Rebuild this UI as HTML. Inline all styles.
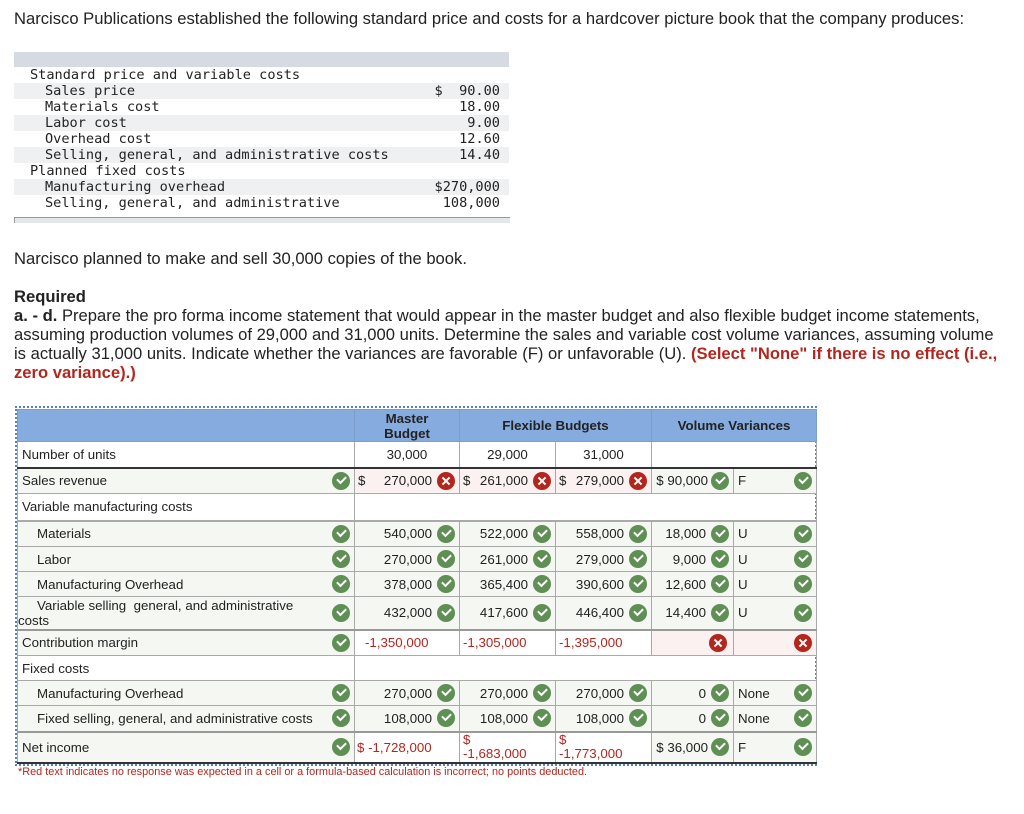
<!DOCTYPE html>
<html><head><meta charset="utf-8"><style>
body{margin:0;background:#fff;width:1024px;height:814px;position:relative;font-family:"Liberation Sans",sans-serif;color:#222;overflow:hidden}
.p{position:absolute;left:14px;font-size:16.6px;margin:0}
.mono{font-family:"DejaVu Sans Mono","Liberation Mono",monospace;font-size:13.6px;color:#222}
.tr{position:absolute;left:14px;width:495px;height:16px;line-height:16px}
.tr.g{background:#eef0f2}
.tr span{position:absolute;white-space:pre}
table{position:absolute;left:17px;top:409px;border-collapse:collapse;table-layout:fixed;font-size:13.3px}
td{border:1px solid #a9a9a9;padding:0;position:relative;white-space:nowrap}
.hd td{background:#86abdf;font-weight:bold;text-align:center;height:31px;border-color:#7c9cc9;line-height:15px}
.lab{padding-left:4px}
.ind{padding-left:19px}
.gr td{background:#f5f7f3}
.n{text-align:right;padding-right:27px}
.ok,.bad{position:absolute;right:4px;top:50%;margin-top:-9px;width:18px;height:18px;border-radius:50%}
.ok{background:#5f8f55}
.bad{background:#b3261e}
.ok:after{content:"";position:absolute;left:5px;top:4px;width:7px;height:4px;border-left:2px solid #fff;border-bottom:2px solid #fff;transform:rotate(-45deg)}
.bad:before,.bad:after{content:"";position:absolute;left:8px;top:4px;width:2px;height:10px;background:#fff;transform:rotate(45deg)}
.bad:after{transform:rotate(-45deg)}
.red{color:#b3261e}
.pink{background:#fbf1f1!important}
</style></head><body>
<p class="p" style="top:9px">Narcisco Publications established the following standard price and costs for a hardcover picture book that the company produces:</p>

<div style="position:absolute;left:14px;top:52px;width:495px;height:15px;background:#d6dbe3"></div>
<div class="mono">
<div class="tr" style="top:67px"><span style="left:16px">Standard price and variable costs</span></div>
<div class="tr g" style="top:83px"><span style="left:31px">Sales price</span><span style="right:9px">$  90.00</span></div>
<div class="tr" style="top:99px"><span style="left:31px">Materials cost</span><span style="right:9px">18.00</span></div>
<div class="tr g" style="top:115px"><span style="left:31px">Labor cost</span><span style="right:9px">9.00</span></div>
<div class="tr" style="top:131px"><span style="left:31px">Overhead cost</span><span style="right:9px">12.60</span></div>
<div class="tr g" style="top:147px"><span style="left:31px">Selling, general, and administrative costs</span><span style="right:9px">14.40</span></div>
<div class="tr" style="top:163px"><span style="left:16px">Planned fixed costs</span></div>
<div class="tr g" style="top:179px"><span style="left:31px">Manufacturing overhead</span><span style="right:9px">$270,000</span></div>
<div class="tr" style="top:195px"><span style="left:31px">Selling, general, and administrative</span><span style="right:9px">108,000</span></div>
</div>
<div style="position:absolute;left:14px;top:217px;width:495px;height:5px;background:#e3e6ea;border-top:1px solid #999;border-left:1px solid #999"></div>

<p class="p" style="top:249px">Narcisco planned to make and sell 30,000 copies of the book.</p>
<p class="p" style="top:287px;font-weight:bold">Required</p>
<p class="p" style="top:306px;width:995px;line-height:19px"><b>a. - d.</b> Prepare the pro forma income statement that would appear in the master budget and also flexible budget income statements, assuming production volumes of 29,000 and 31,000 units. Determine the sales and variable cost volume variances, assuming volume is actually 31,000 units. Indicate whether the variances are favorable (F) or unfavorable (U). <b style="color:#b3261e">(Select "None" if there is no effect (i.e., zero variance).)</b></p>

<div style="position:absolute;left:15px;top:406px;width:802px;height:360px;border:2px dotted #5a7fc0;box-sizing:border-box"></div>
<table>
<colgroup><col style="width:337px"><col style="width:105px"><col style="width:96px"><col style="width:96px"><col style="width:82px"><col style="width:83px"></colgroup>
<tr class="hd"><td></td><td>Master<br>Budget</td><td colspan="2">Flexible Budgets</td><td colspan="2">Volume Variances</td></tr>
<tr style="height:26px"><td class="lab">Number of units</td><td style="text-align:center">30,000</td><td style="text-align:center">29,000</td><td style="text-align:center">31,000</td><td colspan="2"></td></tr>
<tr class="gr" style="height:26px;border-top:2px solid #333"><td class="lab">Sales revenue<i class="ok"></i></td><td class="n pink"><span style="position:absolute;left:3px">$</span>270,000<i class="bad"></i></td><td class="n pink"><span style="position:absolute;left:3px">$</span>261,000<i class="bad"></i></td><td class="n pink"><span style="position:absolute;left:3px">$</span>279,000<i class="bad"></i></td><td class="n" style="padding-right:25px">$ 90,000<i class="ok"></i></td><td style="padding-left:4px">F<i class="ok"></i></td></tr>
<tr style="height:27px"><td class="lab">Variable manufacturing costs</td><td colspan="5"></td></tr>
<tr class="gr" style="height:26px;border-top:2px solid #aaa"><td class="ind">Materials<i class="ok"></i></td><td class="n">540,000<i class="ok"></i></td><td class="n">522,000<i class="ok"></i></td><td class="n">558,000<i class="ok"></i></td><td class="n">18,000<i class="ok"></i></td><td style="padding-left:4px">U<i class="ok"></i></td></tr>
<tr class="gr" style="height:25px"><td class="ind">Labor<i class="ok"></i></td><td class="n">270,000<i class="ok"></i></td><td class="n">261,000<i class="ok"></i></td><td class="n">279,000<i class="ok"></i></td><td class="n">9,000<i class="ok"></i></td><td style="padding-left:4px">U<i class="ok"></i></td></tr>
<tr class="gr" style="height:25px"><td class="ind">Manufacturing Overhead<i class="ok"></i></td><td class="n">378,000<i class="ok"></i></td><td class="n">365,400<i class="ok"></i></td><td class="n">390,600<i class="ok"></i></td><td class="n">12,600<i class="ok"></i></td><td style="padding-left:4px">U<i class="ok"></i></td></tr>
<tr class="gr" style="height:33px"><td style="line-height:15px;white-space:normal"><span style="padding-left:19px">Variable selling &nbsp;general, and administrative</span><br>costs<i class="ok"></i></td><td class="n">432,000<i class="ok"></i></td><td class="n">417,600<i class="ok"></i></td><td class="n">446,400<i class="ok"></i></td><td class="n">14,400<i class="ok"></i></td><td style="padding-left:4px">U<i class="ok"></i></td></tr>
<tr style="height:26px;border-top:2px solid #999"><td class="lab" style="background:#f5f7f3">Contribution margin<i class="ok"></i></td><td class="red" style="padding-left:10px">-1,350,000</td><td class="red" style="padding-left:3px">-1,305,000</td><td class="red" style="padding-left:3px">-1,395,000</td><td class="pink"><i class="bad" style="right:6px"></i></td><td class="pink"><i class="bad"></i></td></tr>
<tr style="height:25px"><td class="lab">Fixed costs</td><td colspan="5"></td></tr>
<tr class="gr" style="height:25px"><td class="ind">Manufacturing Overhead<i class="ok"></i></td><td class="n">270,000<i class="ok"></i></td><td class="n">270,000<i class="ok"></i></td><td class="n">270,000<i class="ok"></i></td><td class="n">0<i class="ok"></i></td><td style="padding-left:4px">None<i class="ok"></i></td></tr>
<tr class="gr" style="height:26px"><td class="ind">Fixed selling, general, and administrative costs<i class="ok"></i></td><td class="n">108,000<i class="ok"></i></td><td class="n">108,000<i class="ok"></i></td><td class="n">108,000<i class="ok"></i></td><td class="n">0<i class="ok"></i></td><td style="padding-left:4px">None<i class="ok"></i></td></tr>
<tr style="height:31px;border-top:2px solid #999;border-bottom:2px solid #333"><td class="lab" style="background:#f5f7f3">Net income<i class="ok"></i></td><td class="red" style="padding-left:2px">$ -1,728,000</td><td class="red" style="line-height:14px;padding-left:3px;vertical-align:top">$<br>-1,683,000</td><td class="red" style="line-height:14px;padding-left:3px;vertical-align:top">$<br>-1,773,000</td><td class="n" style="background:#f5f7f3;padding-right:25px">$ 36,000<i class="ok"></i></td><td style="padding-left:4px;background:#f5f7f3">F<i class="ok"></i></td></tr>
</table>
<div style="position:absolute;left:18px;top:766px;font-size:10.9px;color:#b3261e">*Red text indicates no response was expected in a cell or a formula-based calculation is incorrect; no points deducted.</div>
</body></html>
